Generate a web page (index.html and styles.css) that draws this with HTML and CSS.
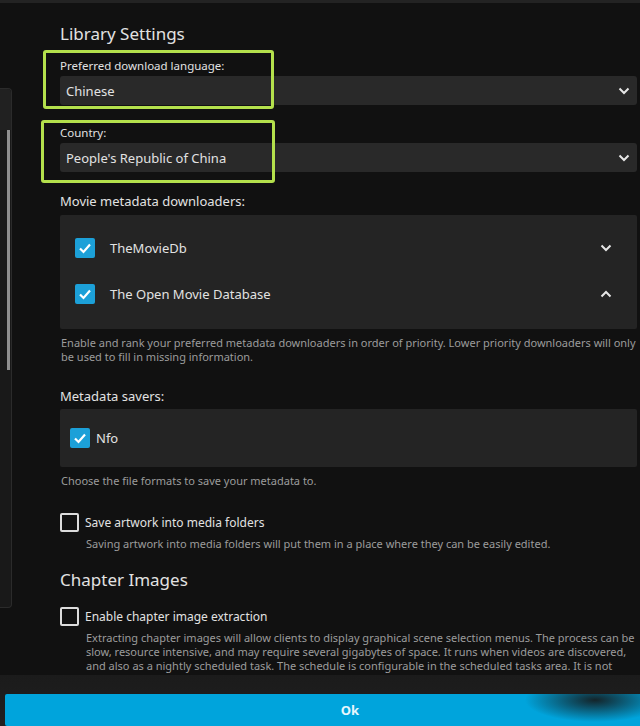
FILE: index.html
```html
<!DOCTYPE html>
<html lang="en">
<head>
    <meta charset="UTF-8">
    <title>Library Settings</title>
    <meta name="viewport" content="width=device-width, initial-scale=1.0">
    <link rel="stylesheet" href="styles.css">
</head>
<body>
    <div class="topbar"></div>
    <div class="layout">
        <aside class="side">
            <div class="side-head"></div>
            <div class="thumb"></div>
        </aside>

        <main class="content">
            <h2 class="section">Library Settings</h2>

            <div class="field first">
                <div class="mark mark-lang"></div>
                <label class="label">Preferred download language:</label>
                <div class="select">
                    <span>Chinese</span>
                    <svg class="chev" viewBox="0 0 12 8"><polyline points="1.5,1.5 6,6 10.5,1.5"/></svg>
                </div>
            </div>

            <div class="field second">
                <div class="mark mark-country"></div>
                <label class="label">Country:</label>
                <div class="select">
                    <span>People's Republic of China</span>
                    <svg class="chev" viewBox="0 0 12 8"><polyline points="1.5,1.5 6,6 10.5,1.5"/></svg>
                </div>
            </div>

            <h3 class="sub downloaders">Movie metadata downloaders:</h3>
            <div class="list">
                <div class="list-row">
                    <span class="check on"><svg viewBox="0 0 20 20"><polyline points="5,10.5 8.5,14 15,6.5"/></svg></span>
                    <span class="row-text">TheMovieDb</span>
                    <svg class="chev small" viewBox="0 0 12 8"><polyline points="1.5,1.5 6,6 10.5,1.5"/></svg>
                </div>
                <div class="list-row">
                    <span class="check on"><svg viewBox="0 0 20 20"><polyline points="5,10.5 8.5,14 15,6.5"/></svg></span>
                    <span class="row-text">The Open Movie Database</span>
                    <svg class="chev small" viewBox="0 0 12 8"><polyline points="1.5,6.5 6,2 10.5,6.5"/></svg>
                </div>
            </div>
            <p class="desc">Enable and rank your preferred metadata downloaders in order of priority. Lower priority downloaders will only be used to fill in missing information.</p>

            <h3 class="sub savers">Metadata savers:</h3>
            <div class="list savers-box">
                <span class="check on"><svg viewBox="0 0 20 20"><polyline points="5,10.5 8.5,14 15,6.5"/></svg></span>
                <span class="row-text nfo">Nfo</span>
            </div>
            <p class="desc">Choose the file formats to save your metadata to.</p>

            <div class="option artwork">
                <span class="check"></span>
                <div class="option-body">
                    <div class="option-label">Save artwork into media folders</div>
                    <p class="option-desc">Saving artwork into media folders will put them in a place where they can be easily edited.</p>
                </div>
            </div>

            <h2 class="section chapters">Chapter Images</h2>

            <div class="option chapter">
                <span class="check"></span>
                <div class="option-body">
                    <div class="option-label">Enable chapter image extraction</div>
                    <p class="option-desc">Extracting chapter images will allow clients to display graphical scene selection menus. The process can be slow, resource intensive, and may require several gigabytes of space. It runs when videos are discovered, and also as a nightly scheduled task. The schedule is configurable in the scheduled tasks area. It is not recommended to run this task during peak usage hours.</p>
                </div>
            </div>
        </main>
    </div>

    <footer class="footer">
        <button class="ok">Ok</button>
    </footer>
</body>
</html>
```

FILE: styles.css
```css
:root {
    --bg: #111111;
    --panel: #242424;
    --input: #292929;
    --text: #e2e2e2;
    --muted: #9c9c9c;
    --blue: #00a4dc;
    --mark: #b4e04c;
    --font-main: 'Noto Sans', 'Open Sans', sans-serif;
}
* {
    box-sizing: border-box;
    margin: 0;
    padding: 0;
}
html, body {
    height: 100%;
    overflow: hidden;
}
body {
    font-family: var(--font-main);
    background: var(--bg);
    color: var(--text);
}
.topbar {
    height: 3px;
    background: #232323;
}
.layout {
    display: flex;
}
.side {
    width: 12px;
    height: 520px;
    margin-top: 85px;
    background: #191919;
    border: 1px solid #2b2b2b;
    border-left: none;
    border-radius: 0 4px 4px 0;
}
.side-head {
    height: 41px;
    background: #212121;
    border-radius: 0 4px 0 0;
}
.thumb {
    width: 3px;
    height: 240px;
    margin-left: 7px;
    background: #8f8f8f;
}
.content {
    flex: 1;
    margin-left: 48px;
    padding-right: 3px;
}
.section {
    font-size: 17px;
    font-weight: 400;
    line-height: 24px;
    margin-top: 19px;
    color: var(--text);
}
.field {
    position: relative;
}
.field.first {
    margin-top: 12px;
}
.field.second {
    margin-top: 20px;
}
.mark {
    position: absolute;
    border: 3px solid var(--mark);
    border-radius: 3px;
    pointer-events: none;
}
.mark-lang {
    left: -17px;
    top: -8px;
    width: 231px;
    height: 59px;
}
.mark-country {
    left: -19px;
    top: -5px;
    width: 234px;
    height: 63px;
}
.label {
    display: block;
    font-size: 11.5px;
    line-height: 16px;
    margin-bottom: 2px;
}
.select {
    height: 29px;
    background: var(--input);
    border-radius: 3px;
    display: flex;
    align-items: center;
    justify-content: space-between;
    padding: 0 7px 0 6px;
    font-size: 13px;
}
.chev {
    width: 12px;
    height: 8px;
    fill: none;
    stroke: #e6e6e6;
    stroke-width: 2;
}
.sub {
    font-size: 13px;
    font-weight: 400;
    line-height: 18px;
}
.sub.downloaders {
    margin-top: 20px;
}
.sub.savers {
    margin-top: 23px;
}
.list {
    background: var(--panel);
    margin-top: 5px;
    padding: 10px 25px 12px 15px;
    border-radius: 2px;
}
.list-row {
    height: 46px;
    display: flex;
    align-items: center;
}
.row-text {
    font-size: 13px;
    margin-left: 15px;
    flex: 1;
}
.check {
    width: 20px;
    height: 20px;
    flex: none;
    border: 2px solid #dcdcdc;
    border-radius: 2px;
    display: inline-block;
}
.check.on {
    background: #1ca0d8;
    border: none;
}
.check svg {
    display: block;
    width: 20px;
    height: 20px;
    fill: none;
    stroke: #fff;
    stroke-width: 2.2;
}
.desc {
    margin-top: 7px;
    margin-left: 1px;
    font-size: 11px;
    line-height: 14px;
    color: var(--muted);
}
.savers-box {
    height: 58px;
    margin-top: 4px;
    padding: 0 10px;
    display: flex;
    align-items: center;
}
.row-text.nfo {
    margin-left: 6px;
}
.option {
    display: flex;
    align-items: flex-start;
}
.option .check {
    width: 19px;
    height: 19px;
}
.option.artwork {
    margin-top: 25px;
}
.option-body {
    margin-left: 6px;
}
.option-label {
    font-size: 12px;
    line-height: 20px;
}
.option-desc {
    margin-top: 4px;
    margin-left: 1px;
    font-size: 11px;
    line-height: 14px;
    color: var(--muted);
}
.section.chapters {
    margin-top: 17px;
}
.option.chapter {
    margin-top: 15px;
}
.footer {
    position: fixed;
    left: 0;
    right: 0;
    bottom: 0;
    height: 51px;
    padding: 19px 0 0 5px;
    background: linear-gradient(#1b1b1b, #202020);
    overflow: hidden;
}
.footer::before {
    content: '';
    position: absolute;
    left: 0;
    right: 0;
    top: -28px;
    height: 28px;
    background: linear-gradient(rgba(17,17,17,0), rgba(17,17,17,0.6));
}
.ok {
    display: block;
    width: 690px;
    height: 32px;
    border: none;
    border-radius: 2px;
    background: radial-gradient(ellipse 70px 22px at 590px 6px, rgba(22,22,22,0.9), rgba(22,22,22,0)), var(--blue);
    color: #e8f6fc;
    font-family: var(--font-main);
    font-size: 13px;
    font-weight: 700;
    text-align: center;
}
```
